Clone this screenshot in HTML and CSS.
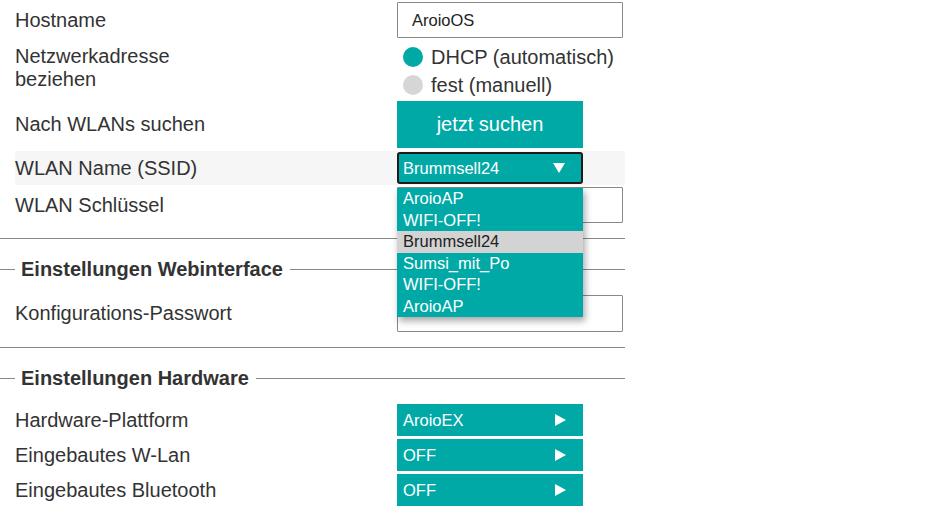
FILE: index.html
```html
<!DOCTYPE html>
<html lang="de">
<head>
<meta charset="utf-8">
<title>Aroio Einstellungen</title>
<link rel="stylesheet" href="styles.css">
</head>
<body>
<div class="page">
  <div class="row r-host">
    <div class="label">Hostname</div>
    <div class="input"><span>AroioOS</span></div>
  </div>

  <div class="row r-net">
    <div class="label two">Netzwerkadresse<br>beziehen</div>
    <div class="radios">
      <div class="radio"><span class="dot on"></span><span>DHCP (automatisch)</span></div>
      <div class="radio"><span class="dot"></span><span>fest (manuell)</span></div>
    </div>
  </div>

  <div class="row r-scan">
    <div class="label">Nach WLANs suchen</div>
    <div class="btn">jetzt suchen</div>
  </div>

  <div class="row r-ssid">
    <div class="label">WLAN Name (SSID)</div>
    <div class="select-wrap">
      <div class="select"><span>Brummsell24</span><span class="tri-down"></span></div>
      <ul class="menu">
        <li>AroioAP</li>
        <li>WIFI-OFF!</li>
        <li class="sel">Brummsell24</li>
        <li>Sumsi_mit_Po</li>
        <li>WIFI-OFF!</li>
        <li>AroioAP</li>
      </ul>
    </div>
  </div>

  <div class="row r-key">
    <div class="label">WLAN Schlüssel</div>
    <div class="input"></div>
  </div>

  <div class="hr"></div>

  <div class="legend"><span class="seg-l"></span><span class="ltext">Einstellungen Webinterface</span><span class="seg-r"></span></div>

  <div class="row r-pass">
    <div class="label">Konfigurations-Passwort</div>
    <div class="input tall"></div>
  </div>

  <div class="hr"></div>

  <div class="legend"><span class="seg-l"></span><span class="ltext">Einstellungen Hardware</span><span class="seg-r"></span></div>

  <div class="row r-hw first">
    <div class="label">Hardware-Plattform</div>
    <div class="choice"><span>AroioEX</span><span class="tri-right"></span></div>
  </div>
  <div class="row r-hw">
    <div class="label">Eingebautes W-Lan</div>
    <div class="choice"><span>OFF</span><span class="tri-right"></span></div>
  </div>
  <div class="row r-hw">
    <div class="label">Eingebautes Bluetooth</div>
    <div class="choice"><span>OFF</span><span class="tri-right"></span></div>
  </div>
</div>
</body>
</html>
```

FILE: styles.css
```css
* { box-sizing: border-box; }
body {
  margin: 0;
  font-family: "Liberation Sans", Arial, sans-serif;
  color: #333;
  background: #fff;
}
.page { width: 625px; }

.row {
  display: flex;
  align-items: center;
  margin-left: 15px;
  width: 610px;
}
.label {
  width: 382px;
  font-size: 20px;
  line-height: 23px;
  flex: none;
}

.input {
  width: 226px;
  height: 36px;
  border: 1px solid #888;
  border-radius: 1px;
  padding-left: 14px;
  font-size: 16.5px;
  color: #222;
  display: flex;
  align-items: center;
  background: #fff;
}
.input.tall { height: 37px; }

.r-host { height: 40px; }

.r-net { margin-top: 3px; height: 56px; align-items: flex-start; }
.label.two { padding-top: 2px; }
.radios { display: flex; flex-direction: column; }
.radio {
  display: flex;
  align-items: center;
  gap: 8px;
  height: 28px;
  padding-left: 6px;
  font-size: 20px;
}
.dot {
  width: 20px;
  height: 20px;
  border-radius: 50%;
  background: #d6d6d6;
  flex: none;
}
.dot.on { background: #00a9a6; }

.r-scan { margin-top: 2px; height: 47px; }
.btn {
  width: 186px;
  height: 47px;
  background: #00a9a6;
  color: #fff;
  font-size: 20px;
  display: flex;
  align-items: center;
  justify-content: center;
}

.r-ssid { margin-top: 3px; height: 34px; background: #f6f6f6; }
.select-wrap { position: relative; width: 186px; height: 32px; }
.select {
  width: 186px;
  height: 32px;
  border: 2px solid #1c1c1c;
  border-radius: 3px;
  background: #00a9a6;
  color: #fff;
  font-size: 16.5px;
  padding-left: 4px;
  padding-right: 16px;
  display: flex;
  align-items: center;
  justify-content: space-between;
}
.tri-down {
  width: 0;
  height: 0;
  border-left: 6px solid transparent;
  border-right: 6px solid transparent;
  border-top: 10px solid #fff;
}
.menu {
  position: absolute;
  top: 36px;
  left: 0;
  width: 186px;
  margin: 0;
  padding: 0;
  list-style: none;
  background: #00a9a6;
  box-shadow: 2px 4px 7px rgba(0,0,0,0.35);
  z-index: 5;
}
.menu li {
  height: 21.5px;
  line-height: 21.5px;
  padding-left: 6px;
  font-size: 16.5px;
  color: #fff;
}
.menu li.sel { background: #d3d3d3; color: #222; }

.r-key { margin-top: 2px; height: 36px; }

.hr {
  margin-top: 15px;
  height: 1px;
  background: #888;
  width: 625px;
}

.legend {
  margin-top: 18px;
  height: 24px;
  display: flex;
  align-items: center;
  width: 625px;
}
.seg-l { width: 15px; height: 1px; background: #888; flex: none; }
.seg-r { flex: 1; height: 1px; background: #888; }
.ltext {
  font-weight: bold;
  font-size: 20px;
  padding: 0 7px 0 6px;
  color: #333;
}

.r-pass { margin-top: 14px; height: 37px; }

.r-hw { margin-top: 3px; height: 32px; }
.r-hw.first { margin-top: 14px; }
.choice {
  width: 186px;
  height: 32px;
  background: #00a9a6;
  color: #fff;
  font-size: 16.5px;
  padding-left: 6px;
  padding-right: 17px;
  display: flex;
  align-items: center;
  justify-content: space-between;
}
.tri-right {
  width: 0;
  height: 0;
  border-top: 6px solid transparent;
  border-bottom: 6px solid transparent;
  border-left: 11px solid #fff;
}
```
